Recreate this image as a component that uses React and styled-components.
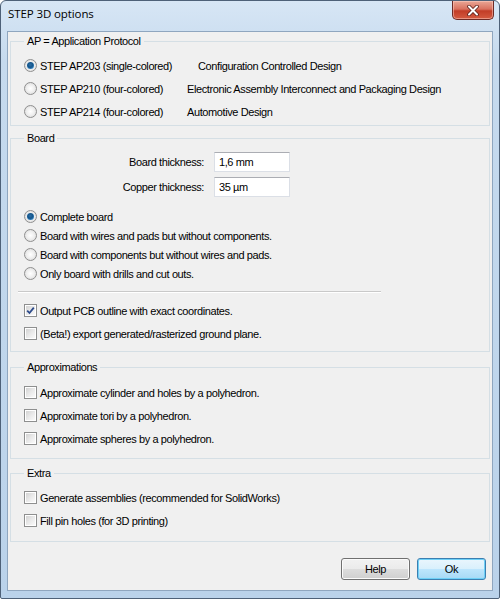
import React from "react";
import styled, { createGlobalStyle } from "styled-components";

const GlobalStyle = createGlobalStyle`
  html, body {
    margin: 0;
    padding: 0;
    background: #fff;
  }
  body {
    font-family: "Liberation Sans", Arial, sans-serif;
    font-size: 11px;
    letter-spacing: -0.4px;
    color: #000;
  }
`;

const Window = styled.div`
  box-sizing: border-box;
  width: 500px;
  height: 599px;
  border: 1px solid #4e6178;
  border-radius: 6px 6px 2px 2px;
  background: linear-gradient(to bottom, #d7e6f5 0px, #c6daee 60px, #bad2ea 100%);
  padding: 0 6px 7px 6px;
  display: flex;
  flex-direction: column;
`;

const TitleBar = styled.div`
  height: 30px;
  display: flex;
  align-items: flex-start;
`;

const Title = styled.span`
  font-family: "Open Sans", "Liberation Sans", sans-serif;
  font-size: 11.5px;
  letter-spacing: -0.1px;
  color: #000;
  margin-top: 5px;
  margin-left: 1px;
`;

const CloseButton = styled.div`
  margin-left: auto;
  margin-right: -1px;
  width: 42px;
  height: 19px;
  box-sizing: border-box;
  border: 1px solid #6d2a25;
  border-top: none;
  border-radius: 0 0 5px 5px;
  background: linear-gradient(to bottom, #eaa796 0%, #d9715f 45%, #c23d27 55%, #d45a40 100%);
  box-shadow: inset 0 0 0 1px rgba(255, 210, 200, 0.5);
  display: flex;
  align-items: center;
  justify-content: center;
`;

const Client = styled.div`
  flex: 1;
  box-sizing: border-box;
  border: 1px solid #8fa6bf;
  background: #f0f0f0;
  padding: 3px 2px 0 2px;
  display: flex;
  flex-direction: column;
`;

const Group = styled.fieldset`
  margin: ${(p) => p.$gap}px 0 0 0;
  border: 1px solid #d5dfe5;
  padding: ${(p) => p.$pt}px 7px ${(p) => p.$pb}px 7px;
  min-width: 0;
`;

const Legend = styled.legend`
  padding: 0 3px;
  margin-left: 6px;
  font-size: 11px;
  line-height: 13px;
`;

const OptionRow = styled.label`
  display: flex;
  align-items: center;
  height: ${(p) => p.$h}px;
  padding-left: 6px;
  white-space: nowrap;
`;

const Text = styled.span`
  margin-left: 3px;
  width: ${(p) => (p.$w ? `${p.$w}px` : "auto")};
`;

const Desc = styled.span`
  margin-left: ${(p) => p.$shift}px;
`;

const Radio = styled.span`
  flex: none;
  box-sizing: border-box;
  width: 13px;
  height: 13px;
  border-radius: 50%;
  border: 1px solid #8f8f8f;
  background: radial-gradient(circle at 50% 50%, #ffffff 0%, #f0f0f0 45%, #d4d4d4 100%);
  display: flex;
  align-items: center;
  justify-content: center;
  &::after {
    content: "";
    width: 7px;
    height: 7px;
    border-radius: 50%;
    display: ${(p) => (p.$on ? "block" : "none")};
    background: radial-gradient(circle at 45% 40%, #2a6fa8 0%, #145489 45%, #3b8fcf 80%, #8bc7ef 100%);
  }
`;

const CheckBox = styled.span`
  flex: none;
  box-sizing: border-box;
  width: 13px;
  height: 13px;
  border: 1px solid #8e8f8f;
  background: #fff;
  padding: 1px;
  display: flex;
`;

const CheckInner = styled.span`
  flex: 1;
  background: linear-gradient(135deg, #d3d3d3 0%, #e9e9e9 50%, #fafafa 100%);
  display: flex;
  align-items: center;
  justify-content: center;
`;

const FieldGrid = styled.div`
  display: grid;
  grid-template-columns: 186px 76px;
  column-gap: 10px;
  row-gap: 5px;
  align-items: center;
`;

const FieldLabel = styled.span`
  text-align: right;
`;

const TextBox = styled.div`
  box-sizing: border-box;
  height: 20px;
  background: #fff;
  border: 1px solid #dbdfe6;
  border-top-color: #abadb3;
  padding: 2px 4px;
  line-height: 14px;
`;

const RadioList = styled.div`
  margin-top: 10px;
`;

const Separator = styled.div`
  width: 363px;
  height: 0;
  border-top: 1px solid #c9c9c9;
  border-bottom: 1px solid #ffffff;
  margin: 8px 0 6px 0;
`;

const ButtonBar = styled.div`
  display: flex;
  justify-content: flex-end;
  gap: 7px;
  margin-top: 16px;
  padding-right: 4px;
`;

const Button = styled.div`
  box-sizing: border-box;
  width: 69px;
  height: 22px;
  border-radius: 3px;
  border: 1px solid ${(p) => (p.$primary ? "#3c7fb1" : "#707070")};
  background: ${(p) =>
    p.$primary
      ? "linear-gradient(to bottom, #eaf6fd 0%, #d9f0fc 50%, #bee6fd 50%, #a7d9f5 100%)"
      : "linear-gradient(to bottom, #f2f2f2 0%, #ebebeb 50%, #dddddd 50%, #cfcfcf 100%)"};
  box-shadow: inset 0 0 0 1px ${(p) => (p.$primary ? "#6ed0f7" : "#fbfbfb")};
  display: flex;
  align-items: center;
  justify-content: center;
`;

const CheckMark = () => (
  <svg width="9" height="9" viewBox="0 0 9 9">
    <path d="M1.2 4.6 L3.5 7 L7.8 1.6" fill="none" stroke="#2c4a8a" strokeWidth="1.8" />
  </svg>
);

const Check = ({ on }) => (
  <CheckBox>
    <CheckInner>{on && <CheckMark />}</CheckInner>
  </CheckBox>
);

const protocols = [
  { label: "STEP AP203 (single-colored)", desc: "Configuration Controlled Design", shift: 11, on: true },
  { label: "STEP AP210 (four-colored)", desc: "Electronic Assembly Interconnect and Packaging Design", shift: 0 },
  { label: "STEP AP214 (four-colored)", desc: "Automotive Design", shift: 0 },
];

const boardModes = [
  { label: "Complete board", on: true },
  { label: "Board with wires and pads but without components." },
  { label: "Board with components but without wires and pads." },
  { label: "Only board with drills and cut outs." },
];

const CheckRow = ({ label, on }) => (
  <OptionRow $h={23}>
    <Check on={on} />
    <Text>{label}</Text>
  </OptionRow>
);

export default function App() {
  return (
    <>
      <GlobalStyle />
      <Window>
        <TitleBar>
          <Title>STEP 3D options</Title>
          <CloseButton>
            <svg width="14" height="11" viewBox="0 0 14 11">
              <path d="M3 1.5 L11 9.5 M11 1.5 L3 9.5" stroke="#5a1f19" strokeWidth="3.6" strokeLinecap="round" />
              <path d="M3 1.5 L11 9.5 M11 1.5 L3 9.5" stroke="#ffffff" strokeWidth="2" strokeLinecap="round" />
            </svg>
          </CloseButton>
        </TitleBar>
        <Client>
          <Group $gap={0} $pt={6} $pb={2}>
            <Legend>AP = Application Protocol</Legend>
            {protocols.map((p) => (
              <OptionRow key={p.label} $h={23}>
                <Radio $on={p.on} />
                <Text $w={147}>{p.label}</Text>
                <Desc $shift={p.shift}>{p.desc}</Desc>
              </OptionRow>
            ))}
          </Group>

          <Group $gap={6} $pt={7} $pb={6}>
            <Legend>Board</Legend>
            <FieldGrid>
              <FieldLabel>Board thickness:</FieldLabel>
              <TextBox>1,6 mm</TextBox>
              <FieldLabel>Copper thickness:</FieldLabel>
              <TextBox>35 µm</TextBox>
            </FieldGrid>
            <RadioList>
              {boardModes.map((m) => (
                <OptionRow key={m.label} $h={19}>
                  <Radio $on={m.on} />
                  <Text>{m.label}</Text>
                </OptionRow>
              ))}
            </RadioList>
            <Separator />
            <CheckRow label="Output PCB outline with exact coordinates." on />
            <CheckRow label="(Beta!) export generated/rasterized ground plane." />
          </Group>

          <Group $gap={9} $pt={7} $pb={8}>
            <Legend>Approximations</Legend>
            <CheckRow label="Approximate cylinder and holes by a polyhedron." />
            <CheckRow label="Approximate tori by a polyhedron." />
            <CheckRow label="Approximate spheres by a polyhedron." />
          </Group>

          <Group $gap={8} $pt={6} $pb={9}>
            <Legend>Extra</Legend>
            <CheckRow label="Generate assemblies (recommended for SolidWorks)" />
            <CheckRow label="Fill pin holes (for 3D printing)" />
          </Group>

          <ButtonBar>
            <Button>Help</Button>
            <Button $primary>Ok</Button>
          </ButtonBar>
        </Client>
      </Window>
    </>
  );
}
